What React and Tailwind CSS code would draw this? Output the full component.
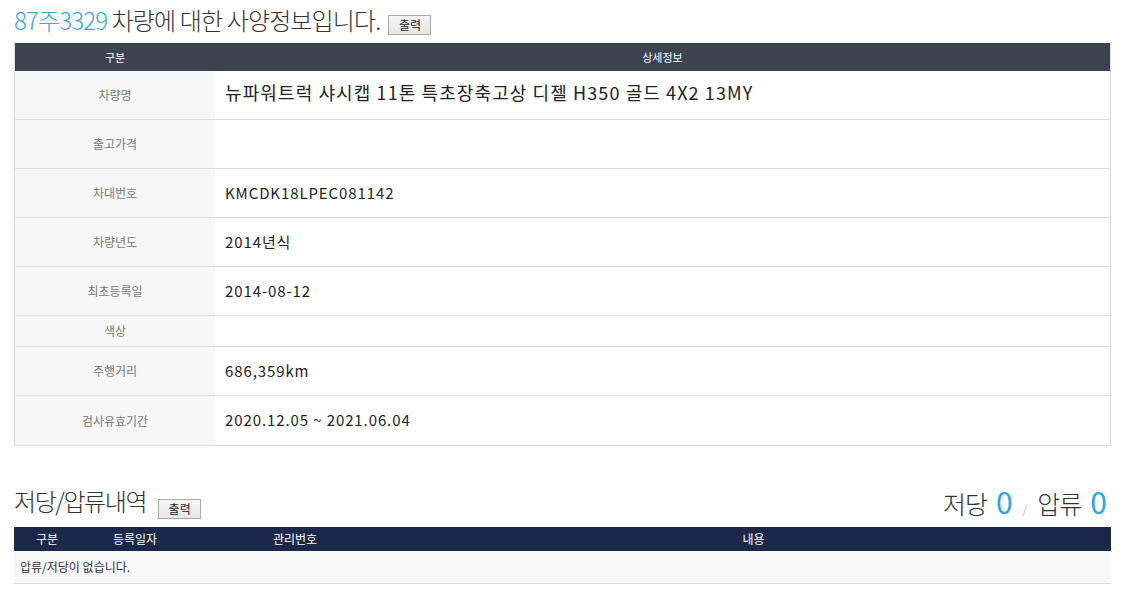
import React from 'react';

const FONT = { fontFamily: '"Noto Sans CJK KR", "Noto Sans", sans-serif' };

const specRows = [
  { label: '차량명', value: '뉴파워트럭 샤시캡 11톤 특초장축고상 디젤 H350 골드 4X2 13MY', big: true },
  { label: '출고가격', value: '' },
  { label: '차대번호', value: 'KMCDK18LPEC081142' },
  { label: '차량년도', value: '2014년식' },
  { label: '최초등록일', value: '2014-08-12' },
  { label: '색상', value: '', short: true },
  { label: '주행거리', value: '686,359km' },
  { label: '검사유효기간', value: '2020.12.05 ~ 2021.06.04' },
];

const PrintButton = () => (
  <button className="h-[20px] w-[43px] border border-[#a9a9a9] bg-gradient-to-b from-[#f6f6f6] to-[#e6e6e6] text-[12px] leading-none text-[#222]">
    출력
  </button>
);

export default function App() {
  return (
    <div className="min-h-[601px] w-[1127px] bg-white text-[#222]" style={FONT}>
      <div className="ml-[14px] w-[1097px]">
        {/* 사양정보 */}
        <div className="flex h-[43px] items-center gap-[8px] pb-[4px]">
          <h2 className="text-[24px] font-light leading-none tracking-[-0.85px] text-[#333]">
            <span className="text-[#3aa8d8]">87주3329</span> 차량에 대한 사양정보입니다.
          </h2>
          <div className="pt-[6px]">
            <PrintButton />
          </div>
        </div>

        <div className="border-x border-b border-[#dcdcdc]">
          <div className="flex h-[28px] items-center bg-[#3c4250] text-[11px] text-white">
            <div className="w-[200px] text-center">구분</div>
            <div className="flex-1 text-center">상세정보</div>
          </div>
          {specRows.map((row, i) => (
            <div
              key={row.label}
              className={`flex ${row.short ? 'h-[31px]' : 'h-[49px]'} ${i < specRows.length - 1 ? 'border-b border-[#dcdcdc]' : ''}`}
            >
              <div className="flex w-[200px] items-center justify-center bg-[#f7f7f7] text-[12px] text-[#777]">
                {row.label}
              </div>
              <div
                className={`flex flex-1 items-center pl-[10px] ${row.big ? 'pb-[5px] text-[18px] tracking-[1.1px]' : 'text-[15px] tracking-[0.9px]'} text-[#222]`}
              >
                {row.value}
              </div>
            </div>
          ))}
        </div>

        {/* 저당/압류 */}
        <div className="mt-[35px] flex h-[40px] items-center justify-between">
          <div className="flex items-center gap-[12px]">
            <h2 className="text-[24px] font-light leading-none tracking-[-1.4px] text-[#333]">저당/압류내역</h2>
            <div className="pt-[12px]">
              <PrintButton />
            </div>
          </div>
          <div className="flex items-baseline pr-[4px] text-[25px] font-light leading-none text-[#333]">
            <span className="tracking-[-1px]">저당</span>
            <span className="ml-[9px] text-[30px] font-normal text-[#2ba6de]">0</span>
            <span className="mx-[10px] text-[12px] text-[#999]">/</span>
            <span className="tracking-[-1px]">압류</span>
            <span className="ml-[9px] text-[30px] font-normal text-[#2ba6de]">0</span>
          </div>
        </div>

        <div className="mt-[6px]">
          <div className="flex h-[24px] items-center bg-[#1b2849] text-[12px] text-white">
            <div className="w-[66px] text-center">구분</div>
            <div className="w-[110px] text-center">등록일자</div>
            <div className="w-[210px] text-center">관리번호</div>
            <div className="flex-1 pr-[4px] text-center">내용</div>
          </div>
          <div className="flex h-[33px] items-center border-b border-[#dcdcdc] bg-[#f8f8f8] pl-[6px] text-[12px] text-[#333]">
            압류/저당이 없습니다.
          </div>
        </div>
      </div>
    </div>
  );
}
